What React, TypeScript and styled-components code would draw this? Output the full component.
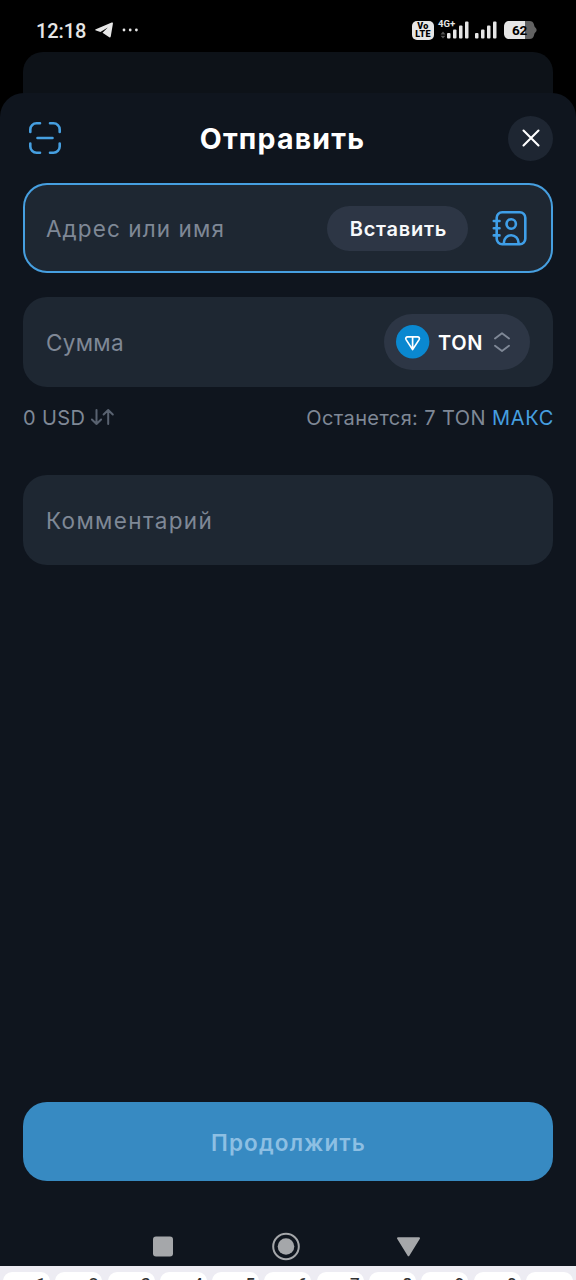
import React from 'react';
import styled, { createGlobalStyle } from 'styled-components';

const GlobalStyle = createGlobalStyle`
  * { box-sizing: border-box; }
  body { margin: 0; background: #000; }
  button { font: inherit; border: 0; padding: 0; margin: 0; }
`;

const Screen = styled.div`
  width: 576px;
  height: 1280px;
  overflow: hidden;
  display: flex;
  flex-direction: column;
  background: #000;
  color: #fff;
  font-family: Inter, 'Liberation Sans', sans-serif;
`;

const StatusBar = styled.header`
  height: 52px;
  flex: none;
  padding: 8px 39px 0 36px;
  display: flex;
  align-items: center;
  justify-content: space-between;
  font-family: Roboto, sans-serif;
  color: #e6e6e6;
`;

const StatusGroup = styled.div`
  display: flex;
  align-items: center;
`;

const Clock = styled.span`
  width: 50px;
  font-size: 20px;
  font-weight: 500;
  line-height: 24px;
  padding-top: 1px;
  letter-spacing: -0.1px;
  margin-right: 9px;
`;

const MoreDots = styled.svg`
  margin-left: 8px;
`;

const VoLte = styled.span`
  width: 22px;
  height: 19px;
  border-radius: 5px;
  background: #e6e6e6;
  color: #000;
  display: flex;
  flex-direction: column;
  align-items: center;
  justify-content: center;
  font-size: 9px;
  font-weight: 900;
  line-height: 8px;
  letter-spacing: 0.3px;
`;

const Mobile = styled.span`
  width: 31px;
  height: 20px;
  margin: -3px 0 0 4px;
  display: grid;

  > * { grid-area: 1 / 1; }
  > span {
    font-size: 9.5px;
    font-weight: 700;
    line-height: 9px;
  }
`;

const MobileBars = styled.svg`
  align-self: end;
`;

const SecondBars = styled.svg`
  margin-left: 6px;
`;

const Battery = styled.span`
  width: 33px;
  height: 18px;
  margin-left: 6px;
  display: grid;
  align-items: center;

  > * { grid-area: 1 / 1; }
  > span {
    padding-left: 8px;
    color: #000;
    font-size: 13.5px;
    font-weight: 700;
    line-height: 18px;
    letter-spacing: -0.2px;
  }
`;

const BackCard = styled.div`
  flex: none;
  height: 66px;
  margin: 0 23px -25px;
  border-radius: 20px 20px 0 0;
  background: #0d1218;
`;

const Sheet = styled.main`
  position: relative;
  flex: 1;
  min-height: 0;
  display: flex;
  flex-direction: column;
  padding: 0 23px;
  border-radius: 24px 24px 0 0;
  background: #0f151e;
`;

const SheetHeader = styled.div`
  height: 90px;
  flex: none;
  display: grid;
  grid-template-columns: 44px 1fr 45px;
  align-items: center;
  justify-items: center;
`;

const Title = styled.h1`
  margin: 2px 0 0 -10px;
  font-size: 28.5px;
  font-weight: 700;
  line-height: 34px;
  letter-spacing: 1.2px;
`;

const CloseButton = styled.button`
  width: 45px;
  height: 45px;
  border-radius: 50%;
  background: #1e2632;
  display: grid;
  place-items: center;
`;

const Field = styled.div<{ $active?: boolean; $gap?: number }>`
  height: 90px;
  flex: none;
  margin-bottom: ${(p) => p.$gap ?? 0}px;
  padding: 0 ${(p) => (p.$active ? 25 : 23)}px 0 23px;
  display: flex;
  align-items: center;
  border-radius: 24px;
  background: #1e2732;
  box-shadow: ${(p) => (p.$active ? 'inset 0 0 0 2px #469fe0' : 'none')};
`;

const Placeholder = styled.span<{ $track: number }>`
  flex: 1;
  padding-top: 2px;
  color: #7f8896;
  font-size: 22.5px;
  line-height: 28px;
  letter-spacing: ${(p) => p.$track}px;
  white-space: nowrap;
`;

const PasteButton = styled.button`
  width: 141px;
  height: 45px;
  margin-right: 23px;
  border-radius: 23px;
  background: #2d3645;
  color: #f7f9fb;
  && {
    padding: 2px 0 0 2px;
    font-size: 20px;
    font-weight: 600;
    letter-spacing: 0.75px;
  }
`;

const TokenButton = styled.button`
  width: 146px;
  height: 56px;
  display: flex;
  align-items: center;
  border-radius: 28px;
  background: #2d3645;
  color: #fff;
  && {
    padding: 0 19px 0 12px;
    font-size: 20px;
    font-weight: 600;
    letter-spacing: 0.7px;
  }
  > span { flex: 1; padding: 1px 0 0 8px; text-align: left; }
`;

const Summary = styled.div`
  flex: none;
  height: 88px;
  padding-top: 18px;
  display: flex;
  align-items: flex-start;
  justify-content: space-between;
  color: #7f8896;
  font-size: 20px;
  line-height: 27px;
  letter-spacing: 0.4px;
  white-space: nowrap;
`;

const Conversion = styled.span`
  display: flex;
  align-items: center;
  gap: 5px;
  > svg { margin-bottom: 3px; }
`;

const MaxLink = styled.a`
  color: #469fe0;
  letter-spacing: 0.7px;
  margin-right: -1px;
`;

const ContinueButton = styled.button`
  flex: none;
  height: 79px;
  margin-top: auto;
  border-radius: 24px;
  background: #378ac2;
  color: #8dbfe3;
  && {
    padding: 2px 0 0 1px;
    font-size: 22.5px;
    font-weight: 600;
    letter-spacing: 1.15px;
  }
`;

const SystemNav = styled.nav`
  flex: none;
  height: 85px;
  padding: 46px 0 0 130px;
  display: flex;
  align-items: flex-start;
  gap: 98px;
  > svg { flex: none; }
  > svg:last-child { margin-left: -3px; }
`;

const Keyboard = styled.div`
  flex: none;
  height: 14px;
  padding: 6px 3px 0;
  display: flex;
  gap: 5.3px;
  overflow: hidden;
  background: #edecf3;
`;

const Key = styled.span`
  flex: none;
  width: 47px;
  height: 60px;
  padding: 3px 4px 0 0;
  border-radius: 9px;
  background: #fff;
  color: #333;
  text-align: right;
  font: 500 17px/18px Roboto, sans-serif;
`;

const TelegramIcon = () => (
  <svg width="19" height="16" viewBox="0 0 19 16" fill="#e6e6e6">
    <path d="M.8 7.300 16.700.6c.9-.3 1.400.2 1.200 1.200L15.800 14.200c-.2 1.200-1 1.500-1.900.9L7.500 10.700l5.300-5.200-7.400 4.400L1 8.600C0 8.300 0 7.600.8 7.300Z" />
  </svg>
);

const ScanIcon = () => (
  <svg width="34" height="34" viewBox="0 0 34 34" fill="none" stroke="#469fe0" strokeWidth="2.6" strokeLinecap="round">
    <path d="M2.300 11V8.500a6.200 6.200 0 0 1 6.200-6.200H12M22 2.300h3.500a6.200 6.200 0 0 1 6.200 6.200V11M31.700 22.500v3a6.200 6.200 0 0 1-6.200 6.200H22M12 31.700H8.500a6.200 6.200 0 0 1-6.200-6.200v-3M9.500 17h15" />
  </svg>
);

const CloseIcon = () => (
  <svg width="18" height="18" viewBox="0 0 18 18" stroke="#fff" strokeWidth="2.1" strokeLinecap="round">
    <path d="m1.500 1.500 15 15m0-15-15 15" />
  </svg>
);

const ContactsIcon = () => (
  <svg width="37" height="36" viewBox="0 0 37 36" fill="none" stroke="#3f9fe8" strokeWidth="2.6" strokeLinecap="round">
    <rect x="5.700" y="2.300" width="28.600" height="32" rx="5.500" />
    <circle cx="20.200" cy="14" r="4.700" />
    <path d="M12.900 33.800v-1.200a7.300 7.300 0 0 1 14.600 0v1.200M2.800 11h5.700M2.800 18.200h5.700M2.800 25.400h5.700" />
  </svg>
);

const TonIcon = () => (
  <svg width="34" height="34" viewBox="0 0 34 34">
    <circle cx="16.700" cy="16.700" r="16.700" fill="#0a88d0" />
    <path d="M11.600 11.900h10c1.500 0 2.300 1.400 1.500 2.700l-6.500 10-6.500-10c-.8-1.300 0-2.700 1.500-2.700ZM16.600 11.900v12" fill="none" stroke="#fff" strokeWidth="1.700" strokeLinejoin="round" />
  </svg>
);

const ChevronsIcon = () => (
  <svg width="18" height="22" viewBox="0 0 18 22" fill="none" stroke="#7f8896" strokeWidth="1.900" strokeLinecap="round" strokeLinejoin="round">
    <path d="m2 7.500 7-5.300 7 5.300M2 14.800l7 5.300 7-5.300" />
  </svg>
);

const SwapIcon = () => (
  <svg width="25" height="18" viewBox="0 0 25 18" fill="none" stroke="#596270" strokeWidth="2" strokeLinecap="round" strokeLinejoin="round">
    <path d="M6.500 2v14M1.900 11.500 6.500 16l4.600-4.500M18.200 16V2M13.600 6.500 18.200 2l4.600 4.500" />
  </svg>
);

export default function App() {
  return (
    <Screen>
      <GlobalStyle />
      <StatusBar>
        <StatusGroup>
          <Clock>12:18</Clock>
          <TelegramIcon />
          <MoreDots width="17" height="4" viewBox="0 0 17 4" fill="#e6e6e6">
            <circle cx="2" cy="2" r="1.400" />
            <circle cx="8.200" cy="2" r="1.400" />
            <circle cx="14.400" cy="2" r="1.400" />
          </MoreDots>
        </StatusGroup>
        <StatusGroup>
          <VoLte>
            <span>Vo</span>
            <span>LTE</span>
          </VoLte>
          <Mobile>
            <MobileBars width="32" height="18" viewBox="0 0 32 18" fill="#e6e6e6">
              <path d="M2.500 13.500 5 10.500l2.500 3ZM2.500 14.700h5L5 17.500Z" fill="#555" />
              <rect x="9" y="12" width="3.500" height="5.500" rx="1" />
              <rect x="15" y="8.500" width="3.500" height="9" rx="1" />
              <rect x="21" y="4.500" width="3.500" height="13" rx="1" />
              <rect x="27" y="0.500" width="3.500" height="17" rx="1" />
            </MobileBars>
            <span>4G+</span>
          </Mobile>
          <SecondBars width="23" height="18" viewBox="0 0 23 18" fill="#e6e6e6">
            <rect x="0" y="12" width="3.500" height="5.500" rx="1" />
            <rect x="6" y="8.500" width="3.500" height="9" rx="1" />
            <rect x="12" y="4.500" width="3.500" height="13" rx="1" />
            <rect x="18" y="0.500" width="3.500" height="17" rx="1" />
          </SecondBars>
          <Battery>
            <svg width="33" height="18" viewBox="0 0 33 18">
              <path d="M21 0h4.500c2.400 0 3.700 1.200 4.300 3l.7 2.500L32.500 8v2l-2 2.500-.7 2.500c-.6 1.800-1.900 3-4.300 3H21Z" fill="#626262" />
              <path d="M21 0H5.500C2 0 0 2 0 5.500v7C0 16 2 18 5.500 18H21Z" fill="#e6e6e6" />
            </svg>
            <span>62</span>
          </Battery>
        </StatusGroup>
      </StatusBar>
      <BackCard />
      <Sheet>
        <SheetHeader>
          <ScanIcon />
          <Title>Отправить</Title>
          <CloseButton aria-label="Закрыть">
            <CloseIcon />
          </CloseButton>
        </SheetHeader>
        <Field $active $gap={24}>
          <Placeholder $track={1.1}>Адрес или имя</Placeholder>
          <PasteButton>Вставить</PasteButton>
          <ContactsIcon />
        </Field>
        <Field>
          <Placeholder $track={0.3}>Сумма</Placeholder>
          <TokenButton>
            <TonIcon />
            <span>TON</span>
            <ChevronsIcon />
          </TokenButton>
        </Field>
        <Summary>
          <Conversion>
            0 USD
            <SwapIcon />
          </Conversion>
          <span>
            Останется: 7 TON <MaxLink>МАКС</MaxLink>
          </span>
        </Summary>
        <Field>
          <Placeholder $track={1.35}>Комментарий</Placeholder>
        </Field>
        <ContinueButton>Продолжить</ContinueButton>
        <SystemNav>
          <svg width="20" height="40" viewBox="0 0 20 40">
            <rect y="9.500" width="20" height="20" rx="3" fill="#a5a7aa" />
          </svg>
          <svg width="30" height="40" viewBox="0 0 30 40">
            <circle cx="15" cy="19.500" r="12.800" fill="none" stroke="#a5a7aa" strokeWidth="2" />
            <circle cx="15" cy="19.500" r="8.300" fill="#a5a7aa" />
          </svg>
          <svg width="25" height="40" viewBox="0 0 25 40">
            <path d="M2 11.300h21L12.500 28.300Z" fill="#a5a7aa" stroke="#a5a7aa" strokeWidth="2" strokeLinejoin="round" />
          </svg>
        </SystemNav>
      </Sheet>
      <Keyboard>
        {['1', '2', '3', '4', '5', '6', '7', '8', '9', '0', ''].map((digit, i) => (
          <Key key={i}>{digit}</Key>
        ))}
      </Keyboard>
    </Screen>
  );
}
